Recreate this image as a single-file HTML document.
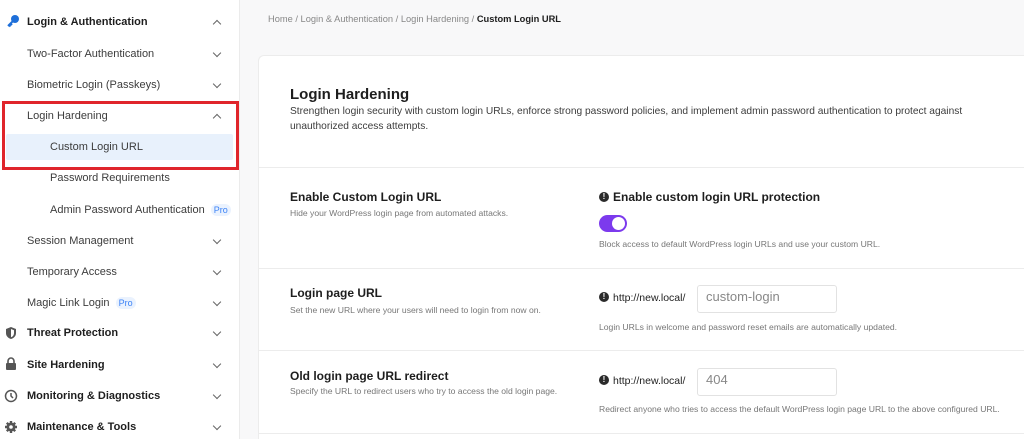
<!DOCTYPE html>
<html style="overflow:hidden;width:1024px;height:439px"><head><meta charset="utf-8"><style>
*{box-sizing:border-box;margin:0;padding:0}
body{width:1024px;height:439px;overflow:hidden;font-family:"Liberation Sans",sans-serif;background:#f8f8f9;position:relative;color:#1e1e1e}
.sb{position:absolute;left:0;top:0;width:240px;height:439px;background:#fff;border-right:1px solid #ebebeb}
.it{position:absolute;left:0;width:240px;font-size:11px;color:#3c3c3c}
.it .t{position:absolute;top:0}
.ch{position:absolute;left:214px;top:2px;width:6px;height:6px;border-right:1.3px solid #666;border-bottom:1.3px solid #666;transform:rotate(45deg)}
.ch.up{transform:rotate(-135deg);top:5px}
.b{font-weight:bold;color:#1e1e1e}
.pro{font-size:9px;color:#3b82f6;background:#eaf2fe;border-radius:6px;padding:1px 3px;margin-left:6px}
.main{position:absolute;left:258px;top:55px;width:800px;height:384px;background:#fff;border:1px solid #ececec;border-bottom:none;border-radius:6px 6px 0 0}
.hr{position:absolute;left:258px;width:780px;height:1px;background:#ececec}
.abs{position:absolute;white-space:nowrap}
.lbl{font-size:12px;font-weight:bold;color:#1e1e1e}
.sm{font-size:8.6px;color:#777}
.info{display:inline-block;width:10px;height:10px;border-radius:50%;background:#2a2a2a;color:#fff;font-size:8px;text-align:center;line-height:10px;font-weight:bold;vertical-align:middle;margin-right:4px;position:relative;top:-1px}
.inp{position:absolute;width:140px;height:28px;border:1px solid #e2e2e2;border-radius:3px;font-size:13px;color:#888;padding:3px 8px}
</style></head><body>
<div class="sb">
<div class="it b" style="top:16px"><svg style="position:absolute;left:6px;top:-2px" width="14" height="14" viewBox="0 0 14 14"><circle cx="9" cy="5" r="4" fill="#1e6fd9"/><path d="M7 7L2 12M3 11l1.5 1.5M4.5 9.5l1.5 1.5" stroke="#1e6fd9" stroke-width="2"/></svg><span class="t" style="left:27px">Login &amp; Authentication</span><i class="ch up"></i></div>
<div class="it" style="top:48px"><span class="t" style="left:27px">Two-Factor Authentication</span><i class="ch"></i></div>
<div class="it" style="top:79px"><span class="t" style="left:27px">Biometric Login (Passkeys)</span><i class="ch"></i></div>
<div class="it" style="top:110px"><span class="t" style="left:27px">Login Hardening</span><i class="ch up"></i></div>
<div style="position:absolute;left:6px;top:134px;width:227px;height:26px;background:#e8f1fc;border-radius:2px"></div>
<div class="it" style="top:141px"><span class="t" style="left:50px">Custom Login URL</span></div>
<div style="position:absolute;left:2px;top:101px;width:237px;height:69px;border:3px solid #e0252b"></div>
<div class="it" style="top:172px"><span class="t" style="left:50px">Password Requirements</span></div>
<div class="it" style="top:204px"><span class="t" style="left:50px">Admin Password Authentication<span class="pro">Pro</span></span></div>
<div class="it" style="top:235px"><span class="t" style="left:27px">Session Management</span><i class="ch"></i></div>
<div class="it" style="top:266px"><span class="t" style="left:27px">Temporary Access</span><i class="ch"></i></div>
<div class="it" style="top:297px"><span class="t" style="left:27px">Magic Link Login<span class="pro">Pro</span></span><i class="ch"></i></div>
<div class="it b" style="top:327px"><svg style="position:absolute;left:5px;top:-1px" width="12" height="14" viewBox="0 0 12 14"><path d="M6 1L11 3V7C11 10 9 12 6 13C3 12 1 10 1 7V3Z" fill="#555"/><path d="M6 3L9 4.3V7C9 9 8 10.5 6 11.3Z" fill="#fff"/></svg><span class="t" style="left:27px">Threat Protection</span><i class="ch"></i></div>
<div class="it b" style="top:359px"><svg style="position:absolute;left:5px;top:-2px" width="12" height="14" viewBox="0 0 12 14"><path d="M3 6V4a3 3 0 016 0v2" stroke="#555" stroke-width="1.6" fill="none"/><rect x="1" y="6" width="10" height="7" rx="1" fill="#555"/></svg><span class="t" style="left:27px">Site Hardening</span><i class="ch"></i></div>
<div class="it b" style="top:390px"><svg style="position:absolute;left:4px;top:-1px" width="14" height="14" viewBox="0 0 14 14"><circle cx="7" cy="7" r="5.5" stroke="#555" stroke-width="1.5" fill="none"/><path d="M7 4v3l2 2" stroke="#555" stroke-width="1.5" fill="none"/></svg><span class="t" style="left:27px">Monitoring &amp; Diagnostics</span><i class="ch"></i></div>
<div class="it b" style="top:421px"><svg style="position:absolute;left:4px;top:-1px" width="14" height="14" viewBox="0 0 14 14"><circle cx="7" cy="7" r="4.5" fill="#555"/><path d="M7 1v12M1 7h12M2.8 2.8l8.4 8.4M11.2 2.8l-8.4 8.4" stroke="#555" stroke-width="2.4"/><circle cx="7" cy="7" r="1.8" fill="#fff"/></svg><span class="t" style="left:27px">Maintenance &amp; Tools</span><i class="ch"></i></div>
</div>
<div class="abs" style="left:268px;top:14px;font-size:9.3px;color:#888">Home / Login &amp; Authentication / Login Hardening / <b style="color:#1e1e1e">Custom Login URL</b></div>
<div class="main"></div>
<div class="abs" style="left:290px;top:86px;font-size:15px;font-weight:bold;color:#1e1e1e">Login Hardening</div>
<div class="abs" style="left:290px;top:105px;font-size:10.2px;color:#3c3c3c;line-height:14.5px;white-space:normal;width:730px">Strengthen login security with custom login URLs, enforce strong password policies, and implement admin password authentication to protect against unauthorized access attempts.</div>
<div class="hr" style="top:167px"></div>
<div class="abs lbl" style="left:290px;top:190px">Enable Custom Login URL</div>
<div class="abs sm" style="left:290px;top:208px">Hide your WordPress login page from automated attacks.</div>
<div class="abs lbl" style="left:599px;top:190px"><span class="info">!</span>Enable custom login URL protection</div>
<div style="position:absolute;left:599px;top:215px;width:28px;height:17px;border-radius:9px;background:#7c3aed"><div style="position:absolute;right:2px;top:2px;width:13px;height:13px;border-radius:50%;background:#fff"></div></div>
<div class="abs sm" style="left:599px;top:239px">Block access to default WordPress login URLs and use your custom URL.</div>
<div class="hr" style="top:268px"></div>
<div class="abs lbl" style="left:290px;top:286px">Login page URL</div>
<div class="abs sm" style="left:290px;top:305px">Set the new URL where your users will need to login from now on.</div>
<div class="abs" style="left:599px;top:292px;font-size:10.5px;color:#1e1e1e"><span class="info">!</span>http://new.local/</div>
<div class="inp" style="left:697px;top:285px">custom-login</div>
<div class="abs sm" style="left:599px;top:322px">Login URLs in welcome and password reset emails are automatically updated.</div>
<div class="hr" style="top:350px"></div>
<div class="abs lbl" style="left:290px;top:369px">Old login page URL redirect</div>
<div class="abs sm" style="left:290px;top:386px">Specify the URL to redirect users who try to access the old login page.</div>
<div class="abs" style="left:599px;top:375px;font-size:10.5px;color:#1e1e1e"><span class="info">!</span>http://new.local/</div>
<div class="inp" style="left:697px;top:368px">404</div>
<div class="abs sm" style="left:599px;top:404px">Redirect anyone who tries to access the default WordPress login page URL to the above configured URL.</div>
<div class="hr" style="top:433px"></div>
</body></html>
